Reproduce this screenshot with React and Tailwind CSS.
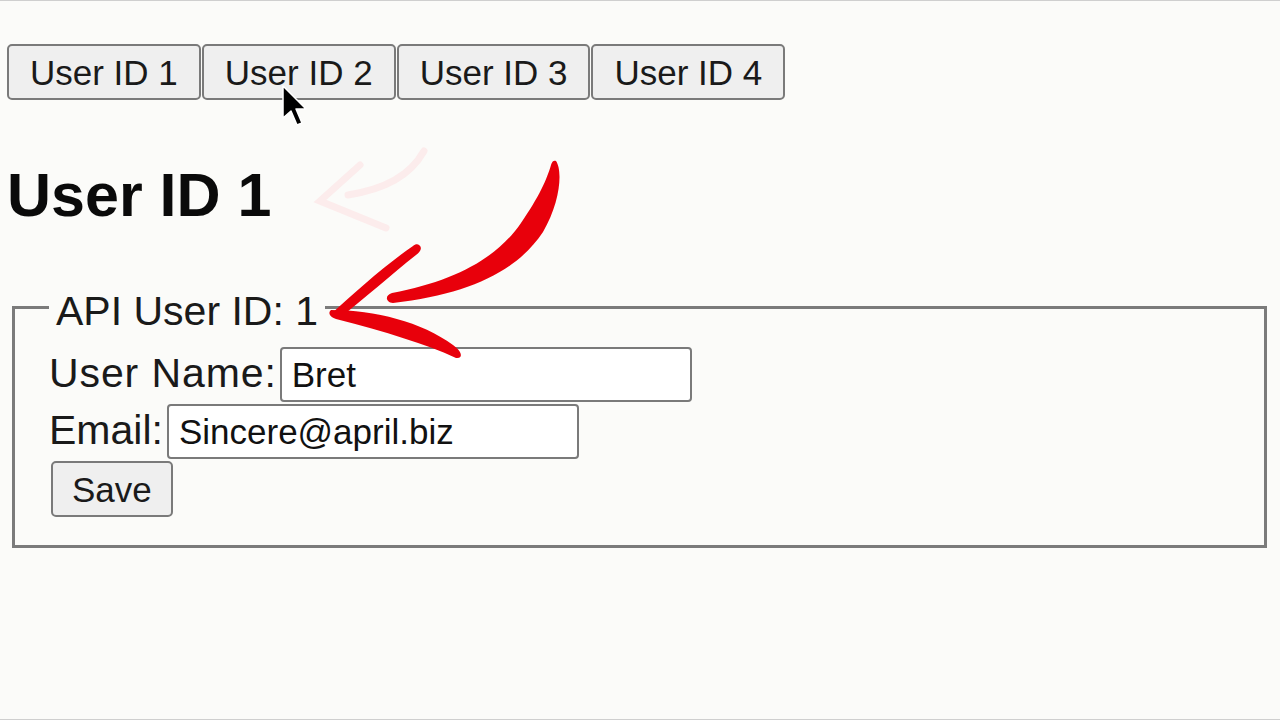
import { useState } from 'react'

const users = [1, 2, 3, 4]

function Arrows() {
  return (
    <svg className="pointer-events-none absolute left-0 top-0" width="1280" height="720" viewBox="0 0 1280 720">
      {/* faint ghost arrow from the previous frame */}
      <g fill="none" stroke="#fcecec" strokeWidth="7" strokeLinecap="round">
        <path d="M424 150 C 410 175 385 188 348 194" />
        <path d="M360 164 L 320 200 L 386 227" />
      </g>
      {/* red hand-drawn arrow */}
      <g fill="#e8000b">
        <path d="M556 160 C 563 170 560 202 543 231 C 517 270 470 293 393 302 C 385 301 385 294 392 292 C 455 280 497 257 521 222 C 539 196 547 178 551 164 C 552 160 554 159 556 160 Z" />
        <path d="M419 244 C 423 247 420 251 416 254 C 392 273 365 297 342 315 L 330 314 C 356 290 388 262 413 245 C 415 243 418 243 419 244 Z" />
        <path d="M331 309 C 375 309 422 321 453 344 C 463 351 463 358 456 357 C 426 343 386 331 336 318 C 329 316 328 311 331 309 Z" />
      </g>
      {/* mouse cursor */}
      <path
        d="M283 85 L283 117 L291 110 L297 124 L302 122 L296 108 L306 108 Z"
        fill="#000"
        stroke="#fff"
        strokeWidth="1.5"
        strokeLinejoin="round"
      />
    </svg>
  )
}

export default function App() {
  const [selected, setSelected] = useState(1)
  const [name, setName] = useState('Bret')
  const [email, setEmail] = useState('Sincere@april.biz')

  return (
    <div className="relative h-[720px] w-[1280px] overflow-hidden border-y border-[#cfcfcf] bg-[#fbfbf9] font-['Liberation_Sans',Arial,sans-serif] text-[#111]">
      <div className="flex gap-[1px] pl-[7px] pt-[43px]">
        {users.map(id => (
          <button
            key={id}
            onClick={() => setSelected(id)}
            className="h-[56px] rounded-[5px] border-2 border-[#7a7a7a] bg-[#efefef] px-[21px] text-[35px] leading-none text-[#1a1a1a]"
          >
            User ID {id}
          </button>
        ))}
      </div>

      <h2 className="ml-[7px] mt-[65px] text-[61px] font-bold leading-[60px] text-[#0a0a0a]">User ID {selected}</h2>

      <fieldset className="ml-[12px] mt-[55px] w-[1255px] border-[3px] border-[#7b7b7b] pb-[28px] pl-[34px] pt-[13px]">
        <legend className="px-[7px] pt-[8px] text-[41px] leading-[46px] text-[#1a1a1a]">API User ID: {selected}</legend>

        <div className="flex items-baseline text-[41px] text-[#1a1a1a]">
          <label className="leading-none tracking-[0.9px]">User Name:</label>
          <input
            value={name}
            onChange={e => setName(e.target.value)}
            className="ml-[3px] h-[55px] w-[412px] rounded-[4px] border-2 border-[#7a7a7a] bg-white px-[10px] text-[35px] text-[#111] outline-none"
          />
        </div>

        <div className="mt-[2px] flex items-baseline text-[41px] text-[#1a1a1a]">
          <label className="leading-none">Email:</label>
          <input
            value={email}
            onChange={e => setEmail(e.target.value)}
            className="ml-[4px] h-[55px] w-[412px] rounded-[4px] border-2 border-[#7a7a7a] bg-white px-[10px] text-[35px] text-[#111] outline-none"
          />
        </div>

        <button className="ml-[2px] mt-[2px] h-[56px] rounded-[5px] border-2 border-[#7a7a7a] bg-[#efefef] px-[19px] text-[35px] leading-none text-[#1a1a1a]">
          Save
        </button>
      </fieldset>

      <Arrows />
    </div>
  )
}
